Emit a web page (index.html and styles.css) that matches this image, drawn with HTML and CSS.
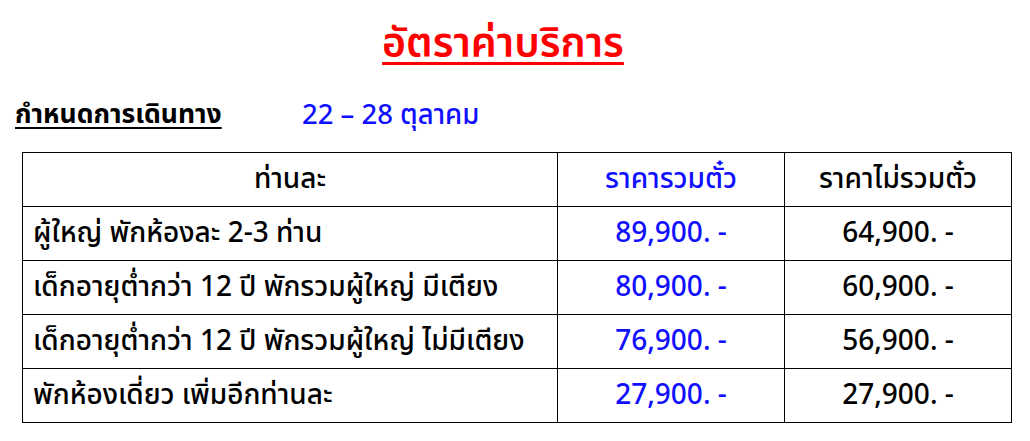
FILE: index.html
```html
<!DOCTYPE html>
<html lang="th">
<head>
<meta charset="utf-8">
<title>อัตราค่าบริการ</title>
<link rel="stylesheet" href="styles.css">
</head>
<body>
<main class="page">
  <h1 class="title">อัตราค่าบริการ</h1>
  <div class="trip">
    <span class="trip-label">กำหนดการเดินทาง</span>
    <span class="trip-date">22 – 28 ตุลาคม</span>
  </div>
  <table class="prices">
    <colgroup>
      <col class="c1"><col class="c2"><col class="c3">
    </colgroup>
    <thead>
      <tr>
        <th>ท่านละ</th>
        <th class="blue">ราคารวมตั๋ว</th>
        <th>ราคาไม่รวมตั๋ว</th>
      </tr>
    </thead>
    <tbody>
      <tr><td class="desc">ผู้ใหญ่ พักห้องละ 2-3 ท่าน</td><td class="num blue">89,900. -</td><td class="num">64,900. -</td></tr>
      <tr><td class="desc">เด็กอายุต่ำกว่า 12 ปี พักรวมผู้ใหญ่ มีเตียง</td><td class="num blue">80,900. -</td><td class="num">60,900. -</td></tr>
      <tr><td class="desc">เด็กอายุต่ำกว่า 12 ปี พักรวมผู้ใหญ่ ไม่มีเตียง</td><td class="num blue">76,900. -</td><td class="num">56,900. -</td></tr>
      <tr><td class="desc">พักห้องเดี่ยว เพิ่มอีกท่านละ</td><td class="num blue">27,900. -</td><td class="num">27,900. -</td></tr>
    </tbody>
  </table>
</main>
</body>
</html>
```

FILE: styles.css
```css
html, body {
  margin: 0;
  padding: 0;
  background: #ffffff;
}
body {
  font-family: Tahoma, "Noto Sans Thai", "Noto Sans", "DejaVu Sans", sans-serif;
  color: #000;
}
.page {
  padding: 14px 0 0 22px;
}
.title {
  margin: 0;
  text-align: center;
  color: #ff0000;
  font-size: 41px;
  font-weight: 600;
  line-height: 60px;
  text-decoration: underline;
  text-decoration-thickness: 3px;
  text-underline-offset: 5px;
  padding-right: 27px;
  width: 962px;
}
.trip {
  display: flex;
  align-items: center;
  margin: 21px 0 0 -7px;
  height: 40px;
}
.trip-label {
  font-size: 26.5px;
  font-weight: 700;
  text-decoration: underline;
  text-decoration-thickness: 2px;
  text-underline-offset: 4px;
  width: 287px;
}
.trip-date {
  font-size: 27.5px;
  font-weight: 500;
  color: #1010ff;
}
.prices {
  margin-top: 17px;
  border-collapse: collapse;
  width: 989px;
  table-layout: fixed;
  border: 1px solid #000;
}
.c1 { width: 535px; }
.c2 { width: 227px; }
.c3 { width: 227px; }
.prices th, .prices td {
  border: 1px solid #000;
  height: 53px;
  padding: 0 8px;
  font-size: 28px;
  font-weight: 500;
  text-align: center;
}
.prices td.desc {
  text-align: left;
  padding-left: 10px;
}
.blue {
  color: #1010ff;
}
```
